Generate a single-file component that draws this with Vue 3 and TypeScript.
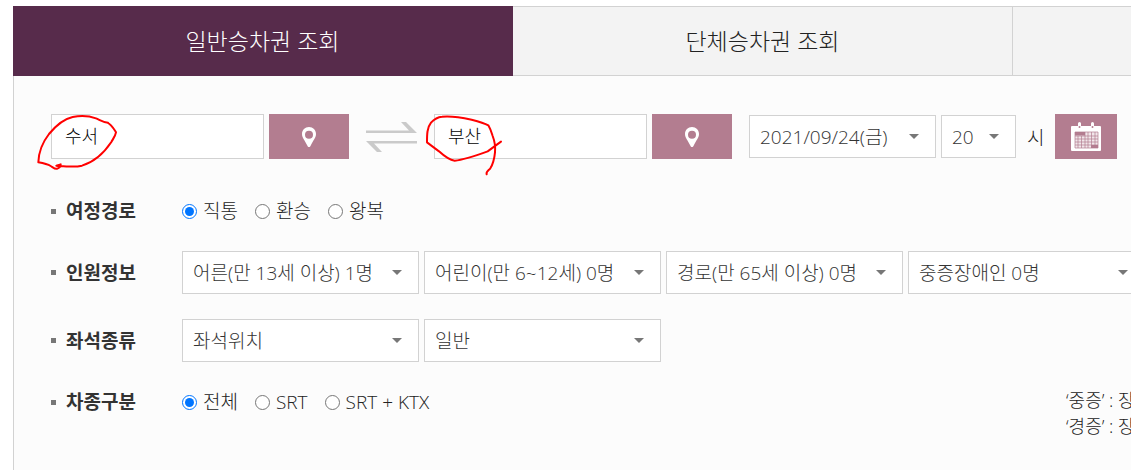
<script setup lang="ts">
import { ref } from 'vue'

interface Station { id: string; name: string; label: string }

const tabs = ['일반승차권 조회', '단체승차권 조회', '']
const activeTab = ref(0)

const from = ref<Station>({ id: 'from', name: '수서', label: '출발역' })
const to = ref<Station>({ id: 'to', name: '부산', label: '도착역' })

const routes = ['직통', '환승', '왕복']
const route = ref('직통')
const trains = ['전체', 'SRT', 'SRT + KTX']
const train = ref('전체')

const passengers = ['어른(만 13세 이상) 1명', '어린이(만 6~12세) 0명', '경로(만 65세 이상) 0명', '중증장애인 0명']
const seats = ['좌석위치', '일반']
</script>

<template>
  <main class="page">
    <nav class="tabs">
      <button
        v-for="(tab, i) in tabs"
        :key="i"
        type="button"
        class="tab"
        :class="{ active: i === activeTab }"
        @click="activeTab = i"
      >{{ tab }}</button>
    </nav>

    <form class="panel" @submit.prevent>
      <div class="trip">
        <div class="group">
          <div class="field">
            <input v-model="from.name" class="station" type="text" :aria-label="from.label" />
            <svg class="mark mark-from" viewBox="105 336 264 180" aria-hidden="true">
              <path d="M324 368C310 367 300 360 288 355C265 347 240 347 218 351C190 357 166 379 147 402C126 429 116 455 115 487C132 490 142 492 152 498C159 502 165 508 171 506C179 504 182 500 182 493L169 497C194 499 222 503 246 497C282 486 314 456 334 426C341 414 346 408 348 397C341 386 334 373 322 368" />
            </svg>
          </div>
          <button type="button" class="icon-button pin" aria-label="출발역 선택">
            <svg width="14" height="20" viewBox="0 0 14 20" aria-hidden="true">
              <path fill="#fff" fill-rule="evenodd" d="M7 0C3 0 0 3 0 7c0 4 3 6.500 5 11 .8 1.800 1.200 2 2 2s1.200-.2 2-2c2-4.500 5-7 5-11 0-4-3-7-7-7Zm0 3.700a4 4 0 1 1 0 8 4 4 0 0 1 0-8Z" />
            </svg>
          </button>
        </div>

        <button type="button" class="swap" aria-label="출발역과 도착역 바꾸기">
          <svg width="51" height="30" viewBox="0 0 51 30" aria-hidden="true">
            <path fill="#cacaca" d="M0 8.500H43L35 0H40L51 11H0ZM51 19V21.500H8L16 30H11L0 19Z" />
          </svg>
        </button>

        <div class="group">
          <div class="field">
            <input v-model="to.name" class="station" type="text" :aria-label="to.label" />
            <svg class="mark mark-to" viewBox="195 66 240 192" aria-hidden="true">
              <path d="M426 155L386 184C350 197 316 209 287 212C272 210 254 197 240 184L204 157C204 134 204 113 216 98C226 87 236 81 249 80C275 77 306 82 338 89C358 94 376 99 388 106C394 116 397 126 401 138C406 151 410 168 408 187C406 207 402 222 394 235C390 241 380 245 383 253" />
            </svg>
          </div>
          <button type="button" class="icon-button pin" aria-label="도착역 선택">
            <svg width="14" height="20" viewBox="0 0 14 20" aria-hidden="true">
              <path fill="#fff" fill-rule="evenodd" d="M7 0C3 0 0 3 0 7c0 4 3 6.500 5 11 .8 1.800 1.200 2 2 2s1.200-.2 2-2c2-4.500 5-7 5-11 0-4-3-7-7-7Zm0 3.700a4 4 0 1 1 0 8 4 4 0 0 1 0-8Z" />
            </svg>
          </button>
        </div>

        <div class="group">
          <span class="select date"><select aria-label="출발일"><option>2021/09/24(금)</option></select></span>
          <span class="select hour"><select id="hour"><option>20</option></select></span>
          <label class="unit" for="hour">시</label>
          <button type="button" class="icon-button calendar" aria-label="달력">
            <svg width="30" height="30" viewBox="0 0 30 30" aria-hidden="true">
              <rect y="4" width="30" height="25" rx="1" fill="#fff" />
              <path d="M8.500 1.500V4M21.500 1.500V4" stroke="#fff" stroke-width="3" stroke-linecap="round" />
              <circle cx="8.500" cy="5" r="1" fill="#b37d90" />
              <circle cx="21.500" cy="5" r="1" fill="#b37d90" />
              <path d="M4 10H27V26H4Z" fill="#f1e6ea" />
              <path d="M4 10H14V13.500H4ZM20 23H27V26H20Z" fill="#b37d90" />
              <path d="M4 10H27V26H4ZM4 14H27M4 17H27M4 20H27M4 23H27M7 14V26M10.500 14V26M14 10V26M17 10V26M20.500 10V26M24 10V26" fill="none" stroke="#b37d90" stroke-width=".7" />
            </svg>
          </button>
        </div>
      </div>

      <div class="row" role="radiogroup" aria-labelledby="route-label">
        <span id="route-label" class="title">여정경로</span>
        <div class="radios">
          <label v-for="r in routes" :key="r" class="radio">
            <input v-model="route" type="radio" name="route" :value="r" />{{ r }}
          </label>
        </div>
      </div>

      <div class="row" role="group" aria-labelledby="people-label">
        <span id="people-label" class="title">인원정보</span>
        <div class="selects">
          <span v-for="p in passengers" :key="p" class="select"><select :aria-label="p"><option>{{ p }}</option></select></span>
        </div>
      </div>

      <div class="row" role="group" aria-labelledby="seat-label">
        <span id="seat-label" class="title">좌석종류</span>
        <div class="selects">
          <span v-for="s in seats" :key="s" class="select"><select :aria-label="s"><option>{{ s }}</option></select></span>
        </div>
      </div>

      <div class="row train" role="radiogroup" aria-labelledby="train-label">
        <span id="train-label" class="title">차종구분</span>
        <div class="radios">
          <label v-for="t in trains" :key="t" class="radio">
            <input v-model="train" type="radio" name="train" :value="t" />{{ t }}
          </label>
        </div>
        <div class="note">
          <p>‘중증’ : 장</p>
          <p>‘경증’ : 장</p>
        </div>
      </div>
    </form>
  </main>
</template>

<style>
body {
  margin: 0;
  background: #fff;
}
</style>

<style scoped>
.page {
  display: flex;
  flex-direction: column;
  min-height: 100vh;
  box-sizing: border-box;
  padding: 6px 0 0 13px;
  overflow: hidden;
  font-family: "Open Sans", "Noto Sans CJK KR", sans-serif;
  font-size: 19px;
  font-weight: 300;
  color: #222;
}

button,
input,
select {
  box-sizing: border-box;
  margin: 0;
  font: inherit;
  color: inherit;
  border-radius: 0;
}

.tabs {
  display: flex;
}

.tab {
  flex: 0 0 500px;
  height: 70px;
  padding: 0 0 2px;
  border: 1px solid #d2d2d2;
  border-left: 0;
  background: #f3f3f3;
  font-size: 23px;
}

.tab.active {
  border-color: #572b4b;
  background: #572b4b;
  color: #fff;
}

.panel {
  display: flex;
  flex: 1;
  flex-direction: column;
  gap: 25px;
  padding: 38px 0 20px 37px;
  border-left: 1px solid #d2d2d2;
  background: #fcfcfc;
}

.trip {
  display: flex;
  align-items: center;
  gap: 17px;
  margin-bottom: 12px;
}

.group {
  display: flex;
  align-items: center;
  gap: 5px;
}

.field {
  position: relative;
}

.station {
  display: block;
  width: 213px;
  height: 45px;
  padding: 0 13px 3px;
  border: 1px solid #d2d2d2;
  background: #fff;
  color: #000;
  font-size: 18px;
}

.mark {
  position: absolute;
  top: -2px;
  overflow: visible;
  pointer-events: none;
}

.mark path {
  fill: none;
  stroke: #f00;
  stroke-width: 6;
  stroke-linecap: round;
  stroke-linejoin: round;
}

.mark-from {
  left: -16px;
  width: 88px;
  height: 60px;
}

.mark-to {
  left: -10px;
  width: 80px;
  height: 64px;
}

.icon-button {
  display: flex;
  align-items: center;
  justify-content: center;
  height: 45px;
  padding: 0;
  border: 0;
  background: #b37d90;
}

.pin {
  width: 80px;
}

.calendar {
  width: 62px;
}

.swap {
  display: flex;
  padding: 0;
  border: 0;
  background: none;
}

.select {
  position: relative;
  flex: none;
  width: 237px;
}

.select::after {
  content: "";
  position: absolute;
  top: 19px;
  right: 17px;
  border: 5px solid transparent;
  border-top-color: #777;
  border-bottom: 0;
  pointer-events: none;
}

.select select {
  display: block;
  width: 100%;
  height: 43px;
  padding: 0 10px;
  border: 1px solid #d2d2d2;
  background: #fff;
  color: #333;
  appearance: none;
}

.date {
  width: 187px;
}

.hour {
  width: 75px;
}

.unit {
  padding: 0 6px;
}

.row {
  display: flex;
  align-items: center;
}

.train {
  align-items: flex-start;
}

.title {
  display: flex;
  flex: 0 0 131px;
  align-items: center;
  gap: 10px;
  line-height: 30px;
  font-weight: 700;
  color: #333;
}

.title::before {
  content: "";
  width: 5px;
  height: 5px;
  background: #777;
}

.radios {
  display: flex;
  gap: 17px;
  line-height: 30px;
}

.radio {
  display: flex;
  align-items: center;
  gap: 6px;
}

.radio input {
  width: 15px;
  height: 15px;
  accent-color: #0075ff;
}

.selects {
  display: flex;
  gap: 5px;
}

.note {
  width: 65px;
  margin-left: auto;
  overflow: hidden;
  font-size: 18px;
  line-height: 26px;
  white-space: nowrap;
}

.note p {
  margin: 0;
}
</style>
